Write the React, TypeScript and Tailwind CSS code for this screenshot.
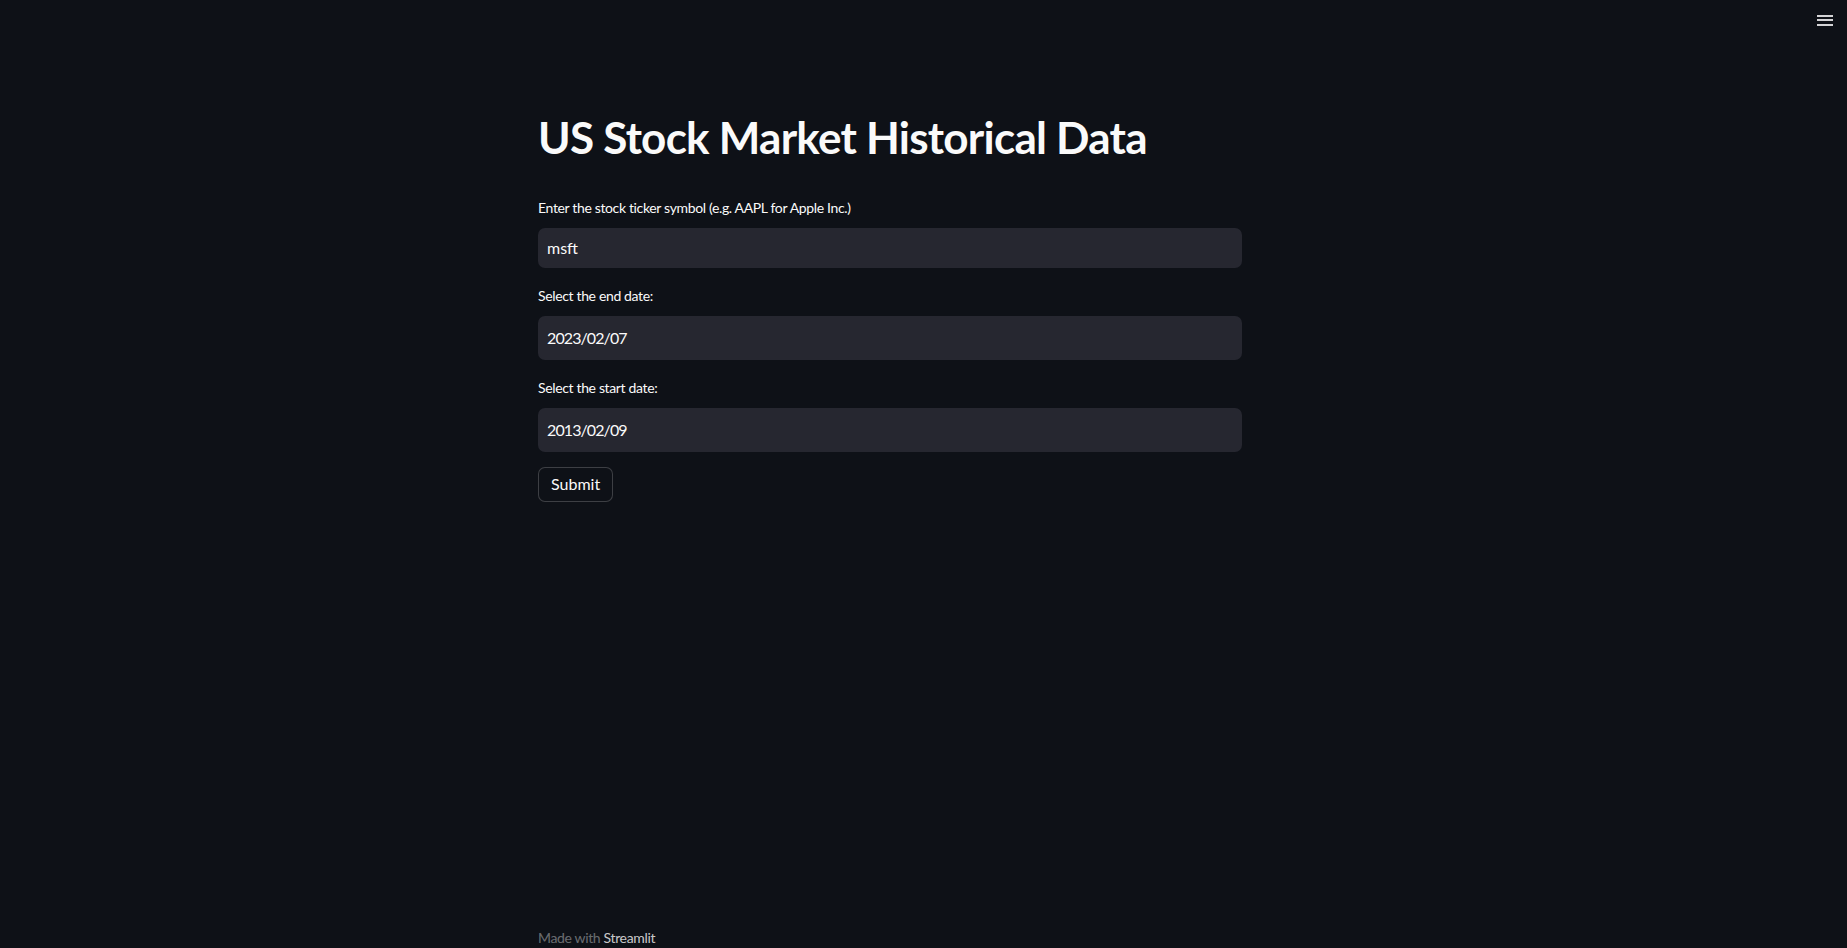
import React from 'react';

const Field = ({ label, value, tall, first }: { label: string; value: string; tall?: boolean; first?: boolean }) => (
  <div className="flex flex-col">
    <div
      className={`h-[20px] flex items-center text-[14px] tracking-[-0.35px] text-[#fafafa] ${first ? 'mt-[1px]' : ''} mb-[10px]`}
    >
      {label}
    </div>
    <div
      className={`${tall ? 'h-[44px] tracking-[-0.9px]' : 'h-[40px]'} w-full rounded-[7px] bg-[#262730] flex items-center px-[9px] text-[16px] text-[#fafafa]`}
    >
      {value}
    </div>
  </div>
);

const App: React.FC = () => {
  return (
    <div
      className="h-[948px] bg-[#0e1117] relative flex flex-col overflow-hidden"
      style={{ fontFamily: 'Lato, "Noto Sans", sans-serif' }}
    >
      <button className="absolute top-[12px] right-[12px] w-[20px] h-[16px] flex flex-col justify-center gap-[2.5px] items-center">
        <span className="block w-[16px] h-[2px] bg-[#d4d4d6]" />
        <span className="block w-[16px] h-[2px] bg-[#d4d4d6]" />
        <span className="block w-[16px] h-[2px] bg-[#d4d4d6]" />
      </button>

      <main className="ml-[538px] w-[704px] pt-[111px] flex flex-col">
        <h1 className="text-[44px] leading-[1.2] font-bold text-[#fafafa] tracking-[-0.75px]">
          US Stock Market Historical Data
        </h1>

        <div className="mt-[33px] flex flex-col gap-[18px]">
          <Field label="Enter the stock ticker symbol (e.g. AAPL for Apple Inc.)" value="msft" first />
          <Field label="Select the end date:" value="2023/02/07" tall />
          <Field label="Select the start date:" value="2013/02/09" tall />
        </div>

        <div className="mt-[15px]">
          <button className="h-[35px] px-[12px] rounded-[7px] border border-[#fafafa]/20 bg-[#0e1117] text-[16px] text-[#fafafa]">
            Submit
          </button>
        </div>
      </main>

      <footer className="mt-auto ml-[538px] pb-[2px] h-[20px] flex items-center text-[14px] tracking-[-0.35px]">
        <span className="text-[#fafafa]/40">Made with&nbsp;</span>
        <span className="text-[#fafafa]/80">Streamlit</span>
      </footer>
    </div>
  );
};

export default App;
